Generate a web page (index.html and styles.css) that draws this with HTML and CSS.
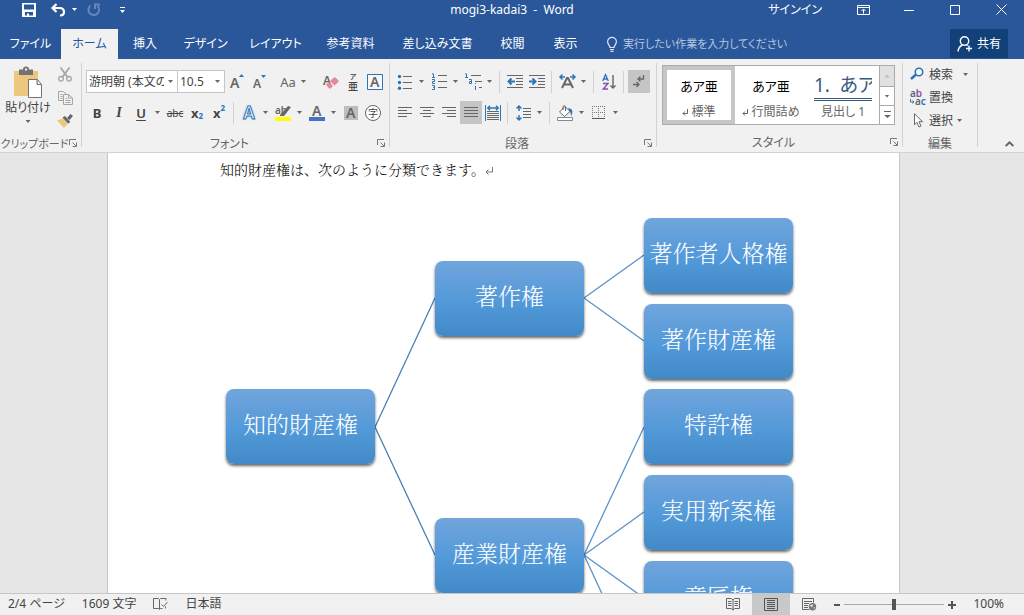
FILE: index.html
```html
<!DOCTYPE html>
<html lang="ja">
<head>
<meta charset="utf-8">
<meta name="viewport" content="width=device-width, initial-scale=1">
<title>mogi3-kadai3 - Word</title>
<link rel="stylesheet" href="styles.css">
</head>
<body>
<header class="titlebar">
  <div class="quick">
    <button class="tb-btn" aria-label="上書き保存"><svg width="14" height="14" viewBox="0 0 14 14"><path fill="#fff" fill-rule="evenodd" d="M0 0h14v14H0zM2 1.500v5h10v-5zM3 9v3.500h2V10.500h2v2h4V9z"/></svg></button>
    <button class="tb-btn undo" aria-label="元に戻す"><svg width="15" height="14" viewBox="0 0 15 14"><path fill="none" stroke="#fff" stroke-width="2.200" d="M5.500 1 1.500 5l4 4M2 5h6.500c3 0 4.500 1.500 4.500 4 0 2-1.500 3.500-4 3.500"/></svg><i class="caret light"></i></button>
    <button class="tb-btn redo" aria-label="繰り返し"><svg width="14" height="14" viewBox="0 0 14 14"><path fill="none" stroke="#6487bd" stroke-width="2" d="M3.500 2.500a5.300 5.300 0 1 0 7 .5M8 6V1.500h5"/></svg></button>
    <button class="tb-btn custom" aria-label="クイック アクセスのカスタマイズ"><svg width="7" height="8" viewBox="0 0 7 8"><path fill="#fff" d="M1 1h5v1H1zM1 4h5L3.500 7z"/></svg></button>
  </div>
  <h1 class="doc-title">mogi3-kadai3&nbsp; -&nbsp; Word</h1>
  <div class="window-tools">
    <a class="signin" href="#">サインイン</a>
    <button class="win-btn" aria-label="リボンの表示オプション"><svg width="13" height="10" viewBox="0 0 13 10"><path fill="none" stroke="#fff" d="M.5.500h12v9H.5zM.5 2.500h12M6.500 8.500v-4M4.500 6l2-2 2 2"/></svg></button>
    <button class="win-btn" aria-label="最小化"><svg width="10" height="10"><path stroke="#fff" d="M0 5.500h10"/></svg></button>
    <button class="win-btn" aria-label="最大化"><svg width="10" height="10"><path fill="none" stroke="#fff" d="M.5.500h9v9h-9z"/></svg></button>
    <button class="win-btn" aria-label="閉じる"><svg width="11" height="11"><path stroke="#fff" d="m.5.500 10 10m0-10-10 10"/></svg></button>
  </div>
</header>
<nav class="tabs" aria-label="リボン">
  <div class="tab-list">
    <button class="tab">ファイル</button>
    <button class="tab active">ホーム</button>
    <button class="tab">挿入</button>
    <button class="tab">デザイン</button>
    <button class="tab">レイアウト</button>
    <button class="tab">参考資料</button>
    <button class="tab">差し込み文書</button>
    <button class="tab">校閲</button>
    <button class="tab">表示</button>
  </div>
  <label class="tell">
    <svg width="10" height="15" viewBox="0 0 10 15"><path fill="none" stroke="#dfe7f3" stroke-width="1.200" d="M3 10.500C3 8.500.6 7.500.6 4.800a4.400 4.400 0 0 1 8.800 0C9.400 7.500 7 8.500 7 10.500zM3 12.500h4M3.500 14.300h3"/></svg>
    <input type="text" aria-label="操作アシスト" placeholder="実行したい作業を入力してください">
  </label>
  <button class="share"><svg width="16" height="16" viewBox="0 0 16 16"><g fill="none" stroke="#fff" stroke-width="1.400"><circle cx="7.500" cy="5" r="4.200"/><path d="M1 15.500c.3-3.500 2-5.500 4.500-6.500M9.500 9l1 .8M12 9.500v6M9 12.500h6"/></g></svg>共有</button>
</nav>
<section class="ribbon">
  <section class="group clip">
    <div class="tools clip-tools">
      <button class="paste">
        <svg width="30" height="31" viewBox="0 0 30 31"><path fill="#edc77d" d="M1 4h24v25H1z"/><path fill="#737373" d="M6 2.500h4a3 3 0 0 1 6 0h4V8H6z"/><path fill="#f1f1f1" d="M12 1.500h2v2h-2z"/><path fill="#fff" stroke="#737373" d="M15.500 12.500h9l4 5v13h-13zM24 12.500v5h4.500"/></svg>
        <span>貼り付け</span><i class="caret"></i>
      </button>
      <div class="clip-side">
        <button class="ib" aria-label="切り取り"><svg width="14" height="15" viewBox="0 0 14 15"><path fill="none" stroke="#a6a6a6" stroke-width="1.800" d="m2.500.500 7 9.500m2-9.500-7 9.500"/><g fill="none" stroke="#a6a6a6" stroke-width="1.300"><circle cx="3" cy="11.800" r="2.300"/><circle cx="11" cy="11.800" r="2.300"/></g></svg></button>
        <button class="ib" aria-label="コピー"><svg width="15" height="14" viewBox="0 0 15 14"><g fill="#f1f1f1" stroke="#a6a6a6"><path d="M.5.500h5l3 3v6h-8z"/><path d="M5.500 3.500h5l4 3.500v6.500h-9zM10.500 3.500V7h4M7.500 7.500h2m-2 2h5m-5 2h5M2.500 3.500h2m-2 2h2m-2 2h2"/></g></svg></button>
        <button class="ib" aria-label="書式のコピー"><svg width="16" height="15" viewBox="0 0 16 15"><path fill="#edc77d" d="M0 7.500 6 5.500l5 5L7 15z"/><path fill="#666" d="m5.500 4.500 2.500-1.500 5.500 6-2.500 1.500zM10 5l3.500-4L16 3l-3.500 4z"/></svg></button>
      </div>
    </div>
    <h2 class="group-name">クリップボード</h2><button class="launch" aria-label="クリップボードの詳細"><svg width="8" height="8"><path fill="none" stroke="#777" d="M.5 6V.5H7M3.500 3.500 7 7M7.500 3.500v4h-4"/></svg></button>
  </section>

  <section class="group font">
    <div class="tools">
      <div class="row">
        <div class="pick"><select class="family" aria-label="フォント"><option>游明朝 (本文のフォント)</option></select><i class="caret"></i></div>
        <div class="pick"><select class="size" aria-label="フォント サイズ"><option>10.5</option></select><i class="caret"></i></div>
        <button class="ib after-pick" aria-label="フォントの拡大"><svg width="14" height="16"><text class="g" x="0" y="14" font-size="14">A</text><path fill="#2e75b6" d="M9 3h5l-2.500-3z"/></svg></button>
        <button class="ib" aria-label="フォントの縮小"><svg width="14" height="16"><text class="g" x="1" y="14" font-size="12">A</text><path fill="#2e75b6" d="M9 1h5l-2.500 3z"/></svg></button>
        <i class="sep"></i>
        <button class="ib aa">Aa</button><i class="caret"></i>
        <i class="sep push"></i>
        <button class="ib" aria-label="書式のクリア"><svg width="16" height="16"><text class="g" x="0" y="11" font-size="12">A</text><path fill="#e8879a" d="m3 10.500 3-2.500 4 4-2.500 2.500H6zM7 7l4-3.500h1.500l3 3V8l-4 3.500z"/></svg></button>
        <button class="ib ruby" aria-label="ルビ"><small>ア</small><span>亜</span></button>
        <button class="ib" aria-label="囲み線"><svg width="16" height="16"><path fill="#f8f8f8" stroke="#2e75b6" d="M.5.500h15v15H.5z"/><text class="g" x="3" y="13" font-size="14">A</text></svg></button>
      </div>
      <div class="row">
        <button class="ib b">B</button><button class="ib it">I</button><button class="ib u">U</button><i class="caret wide"></i>
        <button class="ib abc">abc</button><button class="ib b">x<sub>2</sub></button><button class="ib b">x<sup>2</sup></button>
        <i class="sep"></i>
        <button class="ib fx" aria-label="文字の効果">A</button><i class="caret wide"></i>
        <button class="ib" aria-label="蛍光ペン"><svg width="17" height="16"><text class="g" x="0" y="9" font-size="10">ab</text><path fill="#666" d="m5 10 8-9 3 1-7 9H5z"/><path fill="#ff0" d="M0 12h16v4H0z"/></svg></button><i class="caret wide"></i>
        <button class="ib" aria-label="フォントの色"><svg width="16" height="16"><text class="g" x="3" y="11" font-size="14">A</text><path fill="#4472c4" d="M0 12h16v4H0z"/></svg></button><i class="caret wide"></i>
        <button class="ib" aria-label="文字の網かけ"><svg width="14" height="14"><path fill="#bdbdbd" d="M0 0h14v14H0z"/><text class="g" x="2" y="12" font-size="14">A</text></svg></button>
        <button class="ib" aria-label="囲い文字"><span class="ring">字</span></button>
      </div>
    </div>
    <h2 class="group-name">フォント</h2><button class="launch" aria-label="フォントの詳細"><svg width="8" height="8"><path fill="none" stroke="#777" d="M.5 6V.5H7M3.500 3.500 7 7M7.500 3.500v4h-4"/></svg></button>
  </section>

  <section class="group para">
    <div class="tools">
      <div class="row">
        <button class="ib" aria-label="箇条書き"><svg width="14" height="16"><path stroke="#666" d="M5 2.500h9M5 8.500h9M5 14.500h9"/><g fill="#2e75b6"><circle cx="1.500" cy="2.500" r="1.700"/><circle cx="1.500" cy="8.500" r="1.700"/><circle cx="1.500" cy="14.300" r="1.700"/></g></svg></button><i class="caret wide"></i>
        <button class="ib" aria-label="段落番号"><svg width="15" height="17"><path stroke="#666" d="M6 2.500h9M6 8.500h9M6 14.500h9"/><path fill="none" stroke="#2e75b6" d="M0 .9h1.500V4M0 4.500h3M0 6.500h2.500v2H.5v2H3M0 12.500h2.500v4H0m1-2h1.500"/></svg></button><i class="caret wide"></i>
        <button class="ib" aria-label="アウトライン"><svg width="17" height="17"><path stroke="#666" d="M6 2.500h10M10 8.500h7M14 14.500h3"/><path fill="none" stroke="#2e75b6" d="M0 .900h1.500V4M0 4.500h3M4 6.500h2.500v4H4.500v-2h2M10.500 10v1m0 2v4"/></svg></button><i class="caret wide"></i>
        <i class="sep"></i>
        <button class="ib" aria-label="インデントを減らす"><svg width="17" height="14"><path stroke="#666" d="M0 .5h16M9 3.500h7M9 6.500h7M9 9.500h7M0 12.500h16"/><path fill="none" stroke="#2e75b6" stroke-width="2" d="M8 6.500H2M4.500 3.500l-3 3 3 3"/></svg></button>
        <button class="ib" aria-label="インデントを増やす"><svg width="17" height="14"><path stroke="#666" d="M0 .5h16M9 3.500h7M9 6.500h7M9 9.500h7M0 12.500h16"/><path fill="none" stroke="#2e75b6" stroke-width="2" d="M0 6.500h6M3.500 3.500l3 3-3 3"/></svg></button>
        <i class="sep"></i>
        <button class="ib" aria-label="拡張書式"><svg width="17" height="15"><path fill="none" stroke="#666" stroke-width="2" d="M3 14 8 4h1l5 10M5 10.500h7"/><path fill="none" stroke="#2e75b6" stroke-width="1.500" d="M6 3H1m2.500-2.500L1 3l2.500 2.500M11 3h5M13.500.500 16 3l-2.500 2.500"/></svg></button><i class="caret wide"></i>
        <i class="sep"></i>
        <button class="ib" aria-label="並べ替え"><svg width="14" height="16"><path fill="none" stroke="#2e75b6" stroke-width="1.300" d="M.7 7 3.500.7 6.300 7M1.500 5h4"/><path fill="none" stroke="#8650b0" stroke-width="1.400" d="M1 9.500h5L1.200 15H6"/><path fill="none" stroke="#666" stroke-width="1.400" d="M11 1v13M8.500 11.500 11 14l2.500-2.500"/></svg></button>
        <i class="sep"></i>
        <button class="ib on" aria-label="編集記号の表示"><svg width="12" height="14"><path fill="none" stroke="#666" stroke-width="1.300" d="M10.500 0v4H5M7.500 1.500 5 4l2.500 2.500M0 9.500h6M3.500 7 6 9.500 3.500 12"/></svg></button>
      </div>
      <div class="row">
        <button class="ib" aria-label="左揃え"><svg width="14" height="11"><path stroke="#666" d="M0 .5h14M0 3.500h9M0 6.500h14M0 9.500h9"/></svg></button>
        <button class="ib" aria-label="中央揃え"><svg width="14" height="11"><path stroke="#666" d="M0 .5h14M3 3.500h8M0 6.500h14M3 9.500h8"/></svg></button>
        <button class="ib" aria-label="右揃え"><svg width="14" height="11"><path stroke="#666" d="M0 .5h14M5 3.500h9M0 6.500h14M5 9.500h9"/></svg></button>
        <button class="ib on" aria-label="両端揃え"><svg width="14" height="11"><path stroke="#666" d="M0 .5h14M0 3.500h14M0 6.500h14M0 9.500h14"/></svg></button>
        <button class="ib" aria-label="均等割り付け"><svg width="16" height="16"><path stroke="#666" d="M2 6.500h12M2 8.500h12M2 10.500h12M2 12.500h12M2 14.500h12"/><path fill="none" stroke="#2e75b6" d="M.5 0v16M15.500 0v16"/><path fill="none" stroke="#2e75b6" stroke-width="1.400" d="M3 3h10M5 .7 2.700 3 5 5.300M11 .7 13.300 3 11 5.300"/></svg></button>
        <i class="sep"></i>
        <button class="ib" aria-label="行間"><svg width="15" height="16"><path stroke="#666" d="M7 3.500h8M7 6.500h8M7 9.500h8M7 12.500h8"/><path fill="none" stroke="#2e75b6" stroke-width="1.500" d="M3 1v5M3 10v5M.5 3.500 3 1l2.500 2.500M.5 12.500 3 15l2.500-2.500"/></svg></button><i class="caret wide"></i>
        <i class="sep"></i>
        <button class="ib" aria-label="塗りつぶし"><svg width="16" height="16"><path fill="#fff" stroke="#666" d="M2.500 7 8 1.500l5 5-5.500 5zM6 5V1.500Q7.500-.5 8.500 1.500V6"/><path fill="#2e75b6" d="m11 3 2 .5c3 1 3 4 1 8-.5-3 0-4-1.500-5z"/><path fill="#fff" stroke="#888" d="M.5 12.500h15v3H.5z"/></svg></button><i class="caret wide"></i>
        <button class="ib" aria-label="罫線"><svg width="14" height="14"><path fill="none" stroke="#777" stroke-dasharray="1 1" d="M.5 0v12M6.500 0v12M12.500 0v12M0 .5h13M0 6.500h13"/><path stroke="#555" d="M0 12.500h13"/></svg></button><i class="caret wide"></i>
      </div>
    </div>
    <h2 class="group-name">段落</h2><button class="launch" aria-label="段落の詳細"><svg width="8" height="8"><path fill="none" stroke="#777" d="M.5 6V.5H7M3.500 3.500 7 7M7.500 3.500v4h-4"/></svg></button>
  </section>

  <section class="group style">
    <div class="gallery">
      <button class="card picked"><span class="sample">あア亜</span><span><svg class="ret" width="6" height="7"><path fill="none" stroke="#666" d="M5.500 0v4.500H1M3 2.500l-2 2 2 2"/></svg> 標準</span></button>
      <button class="card"><span class="sample">あア亜</span><span><svg class="ret" width="6" height="7"><path fill="none" stroke="#666" d="M5.500 0v4.500H1M3 2.500l-2 2 2 2"/></svg> 行間詰め</span></button>
      <button class="card"><span class="sample heading">1.&ensp;あア</span><span>見出し 1</span></button>
      <div class="scroll">
        <button class="dim" aria-label="前の行"><i class="caret up"></i></button>
        <button aria-label="次の行"><i class="caret"></i></button>
        <button aria-label="その他"><svg width="7" height="8"><path fill="#666" d="M0 0h7v1H0zM0 4h7L3.500 7z"/></svg></button>
      </div>
    </div>
    <h2 class="group-name">スタイル</h2><button class="launch" aria-label="スタイルの詳細"><svg width="8" height="8"><path fill="none" stroke="#777" d="M.5 6V.5H7M3.500 3.500 7 7M7.500 3.500v4h-4"/></svg></button>
  </section>

  <section class="group edit">
    <div class="edit-tools">
      <button class="line"><svg width="16" height="15"><circle cx="9" cy="5" r="3.700" fill="#fff" stroke="#2e75b6" stroke-width="1.600"/><path stroke="#2e75b6" stroke-width="2.500" d="m6 7.500-5 4.500"/></svg>検索<i class="caret far"></i></button>
      <button class="line"><svg width="16" height="16"><text class="g" x="0" y="7" font-size="10">a<tspan fill="#8650b0">b</tspan></text><text class="g" x="5" y="15" font-size="10">a<tspan fill="#2e75b6">c</tspan></text><path fill="none" stroke="#2e75b6" d="M.5 9v3H4M2.500 10.500 4 12l-1.500 1.500"/></svg>置換</button>
      <button class="line"><svg width="16" height="15"><path fill="#fff" stroke="#666" d="M4.500.800v11l2.500-2.500 2 4.700 2-1-2-4.300h3.500z"/></svg>選択<i class="caret"></i></button>
    </div>
    <h2 class="group-name">編集</h2>
  </section>
  <button class="collapse" aria-label="リボンを折りたたむ"><svg width="9" height="6"><path fill="none" stroke="#666" stroke-width="2" d="m.7 5 3.800-3.700L8.300 5"/></svg></button>
</section>

<main class="desk">
  <article class="page">
    <p class="body-text">知的財産権は、次のように分類できます。<svg width="8" height="8"><path fill="none" stroke="#777" d="M7.500 0v5H1M3.500 2.500 1 5l2.500 2.500"/></svg></p>
    <div class="diagram">
      <svg class="links" width="680" height="480"><path fill="none" stroke="#4a80b5" stroke-width="1.300" d="M155 247 215 118M155 247 215 375"/><path fill="none" stroke="#5a93c9" stroke-width="1.300" d="M364 118 424 75M364 118 424 161M364 375 424 247M364 375 424 332M364 375 424 418M364 375 424 504"/></svg>
      <div class="node root">知的財産権</div>
      <div class="node mid m1">著作権</div>
      <div class="node mid m2">産業財産権</div>
      <div class="node leaf n1">著作者人格権</div>
      <div class="node leaf n2">著作財産権</div>
      <div class="node leaf n3">特許権</div>
      <div class="node leaf n4">実用新案権</div>
      <div class="node leaf n5">意匠権</div>
    </div>
  </article>
</main>

<footer class="status">
  <span>2/4 ページ</span><span>1609 文字</span>
  <svg width="15" height="13" viewBox="0 0 15 13"><path fill="none" stroke="#666" d="M6.500 1.500v10l-1-1H.5v-10h5zl1-1h5.500v2M6.500 11.500l1-1h2M8.500 6.500l2 2 4-4.500M12.500 8.500v2"/></svg>
  <span>日本語</span>
  <div class="views">
    <button aria-label="閲覧モード"><svg width="14" height="13"><path fill="none" stroke="#666" d="M7 1.500v11M.5.500h5L7 2 8.500.500h5v10h-5L7 12l-1.500-1.500h-5zM2 3.500h3.500M2 5.500h3.500M2 7.500h3.500M8.500 3.500H12M8.500 5.500H12M8.500 7.500H12"/></svg></button>
    <button class="current" aria-label="印刷レイアウト"><svg width="15" height="13"><path fill="none" stroke="#555" d="M.5.500h13v12H.5zM3 2.500h8M3 4.500h8M3 6.500h8M3 8.500h8M3 10.500h8"/></svg></button>
    <button aria-label="Web レイアウト"><svg width="15" height="13"><path fill="none" stroke="#666" d="M7 11.500H.5V.500h11v4M2 3.500h8M2 5.500h5M2 7.500h4M2 9.500h4"/><circle cx="10.500" cy="8.800" r="3.700" fill="#777"/><path fill="#eee" d="m8 7 3-.5-.5 2-1.500.5zM11.500 9.500l1.500-.5-1 2z"/></svg></button>
  </div>
  <div class="zoom">
    <button aria-label="縮小"><svg width="8" height="8"><path stroke="#555" stroke-width="2" d="M1 4h6"/></svg></button>
    <input type="range" min="0" max="100" value="50" aria-label="ズーム">
    <button aria-label="拡大"><svg width="8" height="8"><path stroke="#555" stroke-width="2" d="M0 4h8M4 0v8"/></svg></button>
    <span>100%</span>
  </div>
</footer>
</body>
</html>
```

FILE: styles.css
```css
* { box-sizing: border-box; }
body {
  margin: 0;
  height: 100vh;
  display: flex;
  flex-direction: column;
  overflow: hidden;
  font: 12px/16px "Noto Sans", "Noto Sans CJK JP", sans-serif;
  font-feature-settings: "palt";
  color: #444;
  background: #f1f1f1;
}
button, input, select { font: inherit; font-feature-settings: inherit; color: inherit; }
button { border: 0; padding: 0; background: none; white-space: nowrap; }
svg { display: block; flex: none; overflow: visible; }
.g { font-family: "Noto Sans", sans-serif; font-weight: 600; fill: #666; }

.caret { flex: none; width: 5px; height: 3px; background: #666; clip-path: polygon(0 0, 100% 0, 50% 100%); }
.caret.light { background: #fff; }
.caret.up { background: #bbb; clip-path: polygon(50% 0, 100% 100%, 0 100%); }
.caret.wide { margin: 0 4px 0 3px; }

/* title bar */
.titlebar {
  display: grid;
  grid-template-columns: 1fr auto 1fr;
  align-items: center;
  height: 29px;
  padding-bottom: 10px;
  background: #2a579a;
  color: #fff;
}
.quick { display: flex; align-items: center; padding-left: 22px; }
.tb-btn { display: flex; align-items: center; gap: 6px; }
.undo { margin-left: 15px; }
.redo { margin-left: 10px; }
.custom { margin-left: 18px; }
.doc-title { margin: 0; font-size: 12px; font-weight: 400; }
.window-tools { display: flex; align-items: center; justify-content: flex-end; }
.signin { color: #fff; text-decoration: none; margin-right: 18px; }
.win-btn { display: flex; justify-content: center; width: 46px; }

/* tab strip */
.tabs { display: flex; height: 30px; background: #2a579a; color: #fff; padding-right: 16px; }
.tab-list { display: grid; grid-template-columns: 61px 57px 54px 67px 73px 77px 97px 53px 53px; }
.tab.active { background: #f1f1f1; color: #2a579a; }
.tell { display: flex; align-items: center; flex: 1; gap: 6px; padding-left: 15px; }
.tell input { flex: 1; min-width: 0; border: 0; padding: 0; background: none; font-size: 11px; }
.tell input::placeholder { color: #b7c7e0; opacity: 1; }
.share { display: flex; align-items: center; justify-content: center; gap: 4px; width: 58px; margin-bottom: 1px; background: #124078; }

/* ribbon */
.ribbon { display: flex; height: 94px; padding: 4px 0 5px; border-bottom: 1px solid #d2d2d2; }
.group {
  display: grid;
  grid-template-columns: 1fr auto;
  grid-template-rows: 1fr 16px;
  border-right: 1px solid #d2d2d2;
}
.tools, .gallery, .edit-tools { grid-column: 1 / -1; }
.group-name { margin: 0; font-size: 12px; line-height: 24px; font-weight: 400; text-align: center; color: #666; white-space: nowrap; }
.launch { padding: 6px 4px 0 0; }
.tools { padding: 7px 4px 0; }
.row { display: flex; align-items: center; height: 23px; margin-bottom: 8px; }
.sep { width: 1px; height: 22px; margin: 0 4px 0 3px; background: #d2d2d2; }
.sep.push { margin-left: 10px; }
.ib { display: flex; align-items: center; justify-content: center; width: 22px; height: 23px; flex: none; }
.ib.on { background: #c5c5c5; }

.clip { width: 82px; }
.clip .group-name { font-size: 11px; }
.clip-tools { display: flex; padding: 0 5px; gap: 3px; }
.paste { display: flex; flex-direction: column; align-items: center; width: 46px; padding-top: 4px; }
.paste span { margin: 2px 0 4px; }

.font { width: 308px; }
.pick { display: flex; align-items: center; border: 1px solid #c6c6c6; background: #fff; height: 23px; }
.pick + .pick { border-left: 0; }
.pick select { appearance: none; border: 0; padding: 0 0 0 2px; background: none; outline: 0; overflow: hidden; text-overflow: clip; }
.family { width: 77px; }
.size { width: 33px; }
.pick .caret { margin: 0 4px; }
.after-pick { margin-left: 1px; }
.aa { font-size: 13px; color: #666; margin-right: 2px; }
.ruby { flex-direction: column; font-weight: 500; font-size: 10px; line-height: 10px; }
.ruby small { font-size: 7px; line-height: 8px; }
.b { font-size: 13px; font-weight: 700; }
.b sub, .b sup { font-size: 8px; line-height: 8px; color: #2e75b6; }
.b sub { align-self: end; margin-bottom: 4px; }
.b sup { align-self: start; margin-top: 3px; }
.it { font: italic 700 14px "Liberation Serif", serif; }
.u { font-size: 13px; font-weight: 600; text-decoration: underline; text-underline-offset: 2px; }
.abc { font-size: 10px; text-decoration: line-through; }
.fx { font-size: 17px; font-weight: 600; color: #fff; -webkit-text-stroke: 1px #2e75b6; text-shadow: 0 0 3px #8ab8e0; }
.ring { width: 16px; height: 16px; border: 1px solid #666; border-radius: 50%; font-size: 10px; line-height: 14px; background: #fff; }

.para { width: 267px; }

.style { width: 246px; }
.gallery { display: flex; height: 60px; margin: 2px 7px 0 5px; border: 1px solid #ababab; background: #fff; }
.card { display: flex; flex-direction: column; align-items: center; justify-content: flex-end; width: 72px; padding-bottom: 4px; overflow: hidden; color: #666; }
.card.picked { border: 4px solid #c6c6c6; padding-bottom: 0; }
.card .ret { display: inline-block; }
.sample { height: 28px; font-size: 13px; line-height: 20px; color: #000; }
.sample.heading { width: 58px; height: 26px; margin-bottom: 3px; border-bottom: 3px double #385a80; font-size: 19px; color: #385a80; overflow: hidden; }
.scroll { flex: 1; display: grid; grid-template-rows: 20px 19px 19px; border-left: 1px solid #ababab; }
.scroll button { display: flex; align-items: center; justify-content: center; }
.scroll button + button { border-top: 1px solid #ababab; }
.scroll .dim { background: #e1e1e1; }

.edit { width: 75px; }
.edit-tools { padding-left: 7px; }
.line { display: flex; align-items: center; gap: 3px; height: 23px; }
.line .caret { margin-left: 1px; }
.line .far { margin-left: 7px; }
.edit .group-name { grid-column: 1 / -1; }
.collapse { display: flex; align-items: flex-end; margin-left: auto; padding: 0 10px 0; }

/* document */
.desk { flex: 1; min-height: 0; overflow: hidden; padding-right: 17px; background: #e6e6e6; }
.page { max-width: 793px; margin: 0 auto; height: 100%; padding: 6px 0 0 112px; background: #fff; border: solid #c6c6c6; border-width: 0 1px; overflow: hidden; }
.body-text, .node { font-family: "Noto Serif CJK JP", "Noto Serif JP", "Noto Sans CJK JP", serif; font-feature-settings: normal; }
.body-text { margin: 0; font-size: 14px; line-height: 20px; color: #000; font-weight: 300; }
.body-text svg { display: inline-block; }
.diagram { position: relative; height: 500px; }
.links { position: absolute; left: 0; top: 1px; }
.node {
  position: absolute;
  width: 149px;
  height: 75px;
  padding-bottom: 6px;
  display: flex;
  align-items: center;
  justify-content: center;
  border-radius: 8px;
  background: linear-gradient(#71a5dc, #5299d9 55%, #4289c7);
  box-shadow: 0 2px 3px rgba(0, 0, 0, .6);
  color: #fff;
  font-size: 23px;
  font-weight: 300;
}
.root { left: 6px; top: 210px; }
.mid { left: 215px; }
.m1 { top: 82px; }
.m2 { top: 339px; }
.leaf { left: 424px; }
.n1 { top: 39px; }
.n2 { top: 125px; }
.n3 { top: 210px; }
.n4 { top: 296px; }
.n5 { top: 382px; }

/* status bar */
.status { display: flex; align-items: center; height: 22px; padding-left: 8px; gap: 17px; border-top: 1px solid #c6c6c6; white-space: nowrap; }
.status > span, .zoom span { padding-bottom: 1px; }
.views { display: flex; align-self: stretch; margin-left: auto; }
.views button { display: flex; align-items: center; justify-content: center; width: 38px; }
.views .current { background: #c8c8c8; }
.zoom { display: flex; align-items: center; padding-right: 20px; margin-left: -12px; }
.zoom span { margin-left: 17px; }
.zoom input { appearance: none; width: 100px; height: 14px; margin: 0 4px 0 3px; background: linear-gradient(#aaa, #aaa) center / 100% 1px no-repeat; }
.zoom input::-webkit-slider-thumb { appearance: none; width: 4px; height: 11px; background: #555; }
```
